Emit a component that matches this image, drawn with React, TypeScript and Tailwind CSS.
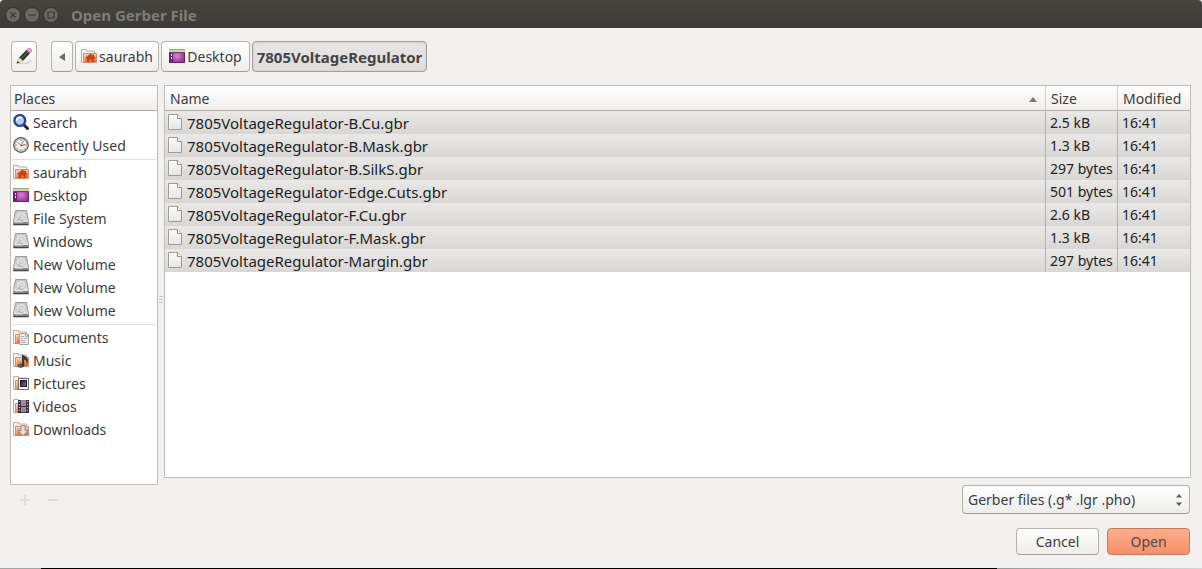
import React from "react";

const ICON = "mb-0.5 h-4 w-4 shrink-0";

function FolderBack() {
  return (
    <>
      <path d="M.5 14.500V1.500h5v1.500h8v3" fill="#f8f7f5" stroke="#b0aeaa" />
      <path d="M.5 14.500h3" stroke="#b0aeaa" />
      <path d="M2.500 14.500v-9h13v9z" fill="url(#folderOrange)" stroke="#dd8a62" />
      <path d="M3.500 13.500v-7h11" fill="none" stroke="#fff" strokeOpacity=".35" />
    </>
  );
}

function SharedGradients() {
  return (
    <svg className="absolute h-0 w-0" aria-hidden="true">
      <defs>
        <linearGradient id="folderOrange" x1="0" y1="0" x2="0" y2="1">
          <stop offset="0" stopColor="#f7cbad" />
          <stop offset="1" stopColor="#e4622c" />
        </linearGradient>
        <radialGradient id="deskPurple">
          <stop offset="0" stopColor="#d983d3" />
          <stop offset="1" stopColor="#9c359c" />
        </radialGradient>
        <linearGradient id="diskMetal" x1="0" y1="0" x2="0" y2="1">
          <stop offset="0" stopColor="#c4c4c4" />
          <stop offset="1" stopColor="#eaeaea" />
        </linearGradient>
        <linearGradient id="paper" x1="0" y1="0" x2="0" y2="1">
          <stop offset="0" stopColor="#fafafa" />
          <stop offset="1" stopColor="#e6e6e6" />
        </linearGradient>
        <linearGradient id="violet" x1="0" y1="0" x2="1" y2="1">
          <stop offset="0" stopColor="#2a2233" />
          <stop offset="1" stopColor="#8a6a9c" />
        </linearGradient>
      </defs>
    </svg>
  );
}

function HomeIcon() {
  return (
    <svg viewBox="0 0 16 16" className={ICON} aria-hidden="true">
      <FolderBack />
      <path
        d="M9.500 5.500 4.500 9.700v.8H6V14h2.500v-2.500h2V14H13v-3.500h1.500v-.8L13 8.500V6.500h-1.500v.7z"
        fill="#cb3f12"
      />
    </svg>
  );
}

function DesktopIcon() {
  return (
    <svg viewBox="0 0 16 16" className={ICON} aria-hidden="true">
      <rect x=".5" y="1.500" width="15" height="13" fill="url(#deskPurple)" stroke="#6c2069" />
      <rect x="0" y="1" width="16" height="3" fill="#d3d2ad" />
      <path d="M0 1.500h16" stroke="#a3a180" />
      <path d="M0 4.500h16" stroke="#5d4f55" />
      <rect x="1" y="5" width="3" height="9" fill="#6d2470" />
      <path d="M2 6h1v2H2zM2 9h1v2H2z" fill="#f1d6f0" />
    </svg>
  );
}

function DiskIcon() {
  return (
    <svg viewBox="0 0 16 16" className={ICON} aria-hidden="true">
      <path d="M2.500.500h11l2 11v3.500H.5v-3.500z" fill="url(#diskMetal)" stroke="#9a9a9a" />
      <ellipse cx="8" cy="5.800" rx="5" ry="4.500" fill="#dedede" stroke="#c0c0c0" strokeWidth=".8" />
      <circle cx="8.300" cy="6" r="1.500" fill="#f8f8f8" stroke="#aaa" strokeWidth=".7" />
      <path d="m4 11 3.500-4M6 9.500l4 1.500" stroke="#b0b0b0" />
      <path d="M1 12h14v2H1z" fill="#858585" />
      <path d="M.5 14.500h15" stroke="#444" />
      <path d="M2 12.500h8" stroke="#b5b5b5" />
    </svg>
  );
}

function SearchIcon() {
  return (
    <svg viewBox="0 0 16 16" className={ICON} aria-hidden="true">
      <path d="m11 11 3.500 3.500" stroke="#22252d" strokeWidth="3" strokeLinecap="round" />
      <circle cx="6.800" cy="6.500" r="5.400" fill="#b9cbe6" stroke="#2a489b" strokeWidth="2.400" />
      <path d="M3.600 6.500a3.200 3.200 0 0 1 5.400-2.300" fill="none" stroke="#fff" strokeWidth="1.600" />
    </svg>
  );
}

function ClockIcon() {
  return (
    <svg viewBox="0 0 16 16" className={ICON} aria-hidden="true">
      <circle cx="8" cy="8" r="7.300" fill="#d5d5d3" stroke="#5b5b59" strokeWidth="1.200" />
      <circle cx="8" cy="8" r="5.800" fill="#f4f4f3" stroke="#b0b0ae" strokeWidth=".8" />
      <path d="M8 3v1M8 12v1M3 8h1M12 8h1M4.500 11.500l.7-.7M11.500 11.500l-.7-.7" stroke="#888" />
      <path d="m4.500 5 3.500 3.500 2.500-4.500" stroke="#777" fill="none" strokeWidth=".9" />
      <path d="m7.500 8.700 4.500-1" stroke="#cf3333" />
    </svg>
  );
}

function DocumentsIcon() {
  return (
    <svg viewBox="0 0 16 16" className={ICON} aria-hidden="true">
      <FolderBack />
      <path d="M6.500 4.500h6l3 3v8h-9z" fill="#ececeb" stroke="#a2a2a0" />
      <path d="M12.500 4.500v3h3M8 7.500h3M8 9.500h2M11 9.500h3M8 11.500h4M8 13.500h5" stroke="#b0b0ae" fill="none" />
    </svg>
  );
}

function MusicIcon() {
  return (
    <svg viewBox="0 0 16 16" className={ICON} aria-hidden="true">
      <FolderBack />
      <path
        d="M9 2c1 2 5 1.500 5.800 5.500.3 2-.3 4-1 5 0-2.500-.8-4.500-2.500-5V13c0 1.800-1.500 2.800-3.300 2.800S5 15 5 13.700s1.500-2.700 4-2.200z"
        fill="#3b3b38"
      />
      <ellipse cx="7.400" cy="13.500" rx="1.400" ry="1" fill="#83837e" />
    </svg>
  );
}

function PicturesIcon() {
  return (
    <svg viewBox="0 0 16 16" className={ICON} aria-hidden="true">
      <FolderBack />
      <rect x="5.500" y="3.500" width="10" height="11" fill="#fafafa" stroke="#74746f" />
      <rect x="7.500" y="5.500" width="6" height="6" fill="url(#violet)" stroke="#1e1a24" />
    </svg>
  );
}

function VideosIcon() {
  return (
    <svg viewBox="0 0 16 16" className={ICON} aria-hidden="true">
      <FolderBack />
      <rect x="5" y="2" width="11" height="13" fill="#3a363c" />
      <path d="M8 2h5v6H8zM8 9h5v5H8z" fill="#a583ad" />
      <path d="M6.500 3v12M14.500 3v12" stroke="#c9c9c9" strokeDasharray="1 2" />
    </svg>
  );
}

function DownloadsIcon() {
  return (
    <svg viewBox="0 0 16 16" className={ICON} aria-hidden="true">
      <FolderBack />
      <path d="M8 4.500h4v5h3L10 15 5 9.500h3z" fill="#dededc" stroke="#8f8f8a" />
    </svg>
  );
}

function FileIcon() {
  return (
    <svg viewBox="0 0 14 16" className="mb-0.5 h-4 w-3.5 shrink-0" aria-hidden="true">
      <path d="M.5.500h9l4 4v11H.5z" fill="url(#paper)" stroke="#9b9b99" />
      <path d="M9.500.500v4h4" fill="#fff" stroke="#8d8d8b" />
      <path d="M1.500 14.500v-13h7" fill="none" stroke="#fff" />
    </svg>
  );
}

function PencilIcon() {
  return (
    <svg viewBox="0 0 16 16" className={ICON} aria-hidden="true">
      <path d="M2 15.500h8l5-3" stroke="#bdbdbb" strokeWidth="1.500" fill="none" opacity=".6" />
      <path d="m3 9.500 7.500-7.500L14 5.200l-7 7.800z" fill="#353734" />
      <path d="m5 10.800 7-7.300" stroke="#71746e" strokeWidth=".9" />
      <path d="M3 9.500 7 13 .8 15.500z" fill="#efe69d" stroke="#a8a05c" strokeWidth=".5" />
      <path d="m1.700 13 1.600 1.400-2.600 1.200z" fill="#222" />
      <path d="m10.500 2 1.700-1.500c1.700-.9 4.300 1.200 3.500 3L14 5.200z" fill="#dc9fd0" stroke="#a76c9d" strokeWidth=".6" />
    </svg>
  );
}

type Place = { label: string; Icon: () => React.ReactElement };

const placeGroups: Place[][] = [
  [
    { label: "Search", Icon: SearchIcon },
    { label: "Recently Used", Icon: ClockIcon },
  ],
  [
    { label: "saurabh", Icon: HomeIcon },
    { label: "Desktop", Icon: DesktopIcon },
    { label: "File System", Icon: DiskIcon },
    { label: "Windows", Icon: DiskIcon },
    { label: "New Volume", Icon: DiskIcon },
    { label: "New Volume", Icon: DiskIcon },
    { label: "New Volume", Icon: DiskIcon },
  ],
  [
    { label: "Documents", Icon: DocumentsIcon },
    { label: "Music", Icon: MusicIcon },
    { label: "Pictures", Icon: PicturesIcon },
    { label: "Videos", Icon: VideosIcon },
    { label: "Downloads", Icon: DownloadsIcon },
  ],
];

const files = [
  ["7805VoltageRegulator-B.Cu.gbr", "2.5 kB"],
  ["7805VoltageRegulator-B.Mask.gbr", "1.3 kB"],
  ["7805VoltageRegulator-B.SilkS.gbr", "297 bytes"],
  ["7805VoltageRegulator-Edge.Cuts.gbr", "501 bytes"],
  ["7805VoltageRegulator-F.Cu.gbr", "2.6 kB"],
  ["7805VoltageRegulator-F.Mask.gbr", "1.3 kB"],
  ["7805VoltageRegulator-Margin.gbr", "297 bytes"],
];

const BUTTON =
  "flex items-center justify-center rounded border border-[#b5b2ad] border-b-[#9f9c97] bg-linear-to-b from-white to-[#eeedeb]";
const HEADER = "bg-linear-to-b from-white to-[#efeeec] border-b border-[#aeaba6]";

function WindowButton({ label, path }: { label: string; path: string }) {
  return (
    <button
      type="button"
      aria-label={label}
      className="flex h-4 w-4 items-center justify-center rounded-full border border-[#33322e] bg-[#6a6862]"
    >
      <svg viewBox="0 0 8 8" className="h-2 w-2" fill="none" stroke="#383733" strokeWidth="1.200" aria-hidden="true">
        <path d={path} />
      </svg>
    </button>
  );
}

export default function App() {
  return (
    <div className="flex min-h-screen flex-col bg-[#f2f1f0] font-['Noto_Sans',sans-serif] text-sm leading-5 text-[#3c3c3c]">
      <SharedGradients />
      <header className="flex h-7 items-center gap-[3px] rounded-t bg-linear-to-b from-[#45443f] to-[#3c3b37] px-[5px] pt-px">
        <WindowButton label="Close" path="M1.500 1.500l5 5M6.500 1.500l-5 5" />
        <WindowButton label="Minimize" path="M.5 4h7" />
        <WindowButton label="Maximize" path="M1 1h6v6H1z" />
        <h1 className="ml-[9px] text-[15px] font-bold text-[#807d76]">Open Gerber File</h1>
      </header>

      <main className="flex grow flex-col px-[11px] pt-[13px] pb-[13px]">
        <nav aria-label="Path" className="flex h-[31px] gap-0.5">
          <button type="button" aria-label="Type a file name" className={`${BUTTON} mr-3 w-[26px]`}>
            <PencilIcon />
          </button>
          <button type="button" aria-label="Back" className={`${BUTTON} w-[22px]`}>
            <svg viewBox="0 0 6 8" className="h-2 w-1.5" fill="#6b6965" aria-hidden="true">
              <path d="M6 0v8L0 4z" />
            </svg>
          </button>
          <button type="button" className={`${BUTTON} min-w-[84px] gap-0.5 px-1`}>
            <HomeIcon />
            saurabh
          </button>
          <button type="button" className={`${BUTTON} min-w-[89px] gap-0.5 px-1`}>
            <DesktopIcon />
            Desktop
          </button>
          <button
            type="button"
            aria-pressed="true"
            className="min-w-[175px] rounded border border-[#a19e99] bg-linear-to-b from-[#e9e7e6] to-[#dfdcda] px-[3px] text-[15px] font-bold text-[#444] shadow-[inset_0_1px_3px_#00000018]"
          >
            7805VoltageRegulator
          </button>
        </nav>

        <div className="-ml-px mt-[13px] flex grow">
          <section className="flex w-[148px] shrink-0 flex-col">
            <div className="grow border border-[#bfbcb7] bg-white">
              <h2 className={`${HEADER} h-[25px] px-[3px] pt-[3px]`}>Places</h2>
              {placeGroups.map((group, index) => (
                <ul key={index}>
                  {index > 0 && (
                    <li aria-hidden="true" className="mx-px flex h-1 items-center">
                      <span className="h-px w-full bg-[#dfdfdf]" />
                    </li>
                  )}
                  {group.map(({ label, Icon }, row) => (
                    <li key={row}>
                      <button type="button" className="flex h-[23px] w-full items-center gap-1 px-0.5 text-left">
                        <Icon />
                        {label}
                      </button>
                    </li>
                  ))}
                </ul>
              ))}
            </div>
            <div className="flex h-[29px] items-center gap-[18px] pl-[10px] text-[#dfdedc]">
              <button type="button" disabled aria-label="Add bookmark">
                <svg viewBox="0 0 10 10" className="h-2.5 w-2.5" fill="currentColor" aria-hidden="true">
                  <path d="M4 0h2v4h4v2H6v4H4V6H0V4h4z" />
                </svg>
              </button>
              <button type="button" disabled aria-label="Remove bookmark">
                <svg viewBox="0 0 10 10" className="h-2.5 w-2.5" fill="currentColor" aria-hidden="true">
                  <path d="M0 4h10v2H0z" />
                </svg>
              </button>
            </div>
          </section>

          <div className="flex w-1.5 shrink-0 items-center justify-center" aria-hidden="true">
            <svg viewBox="0 0 4 8" className="h-2 w-1" stroke="#c9c7c4">
              <path d="M0 .5h4M0 3.500h4M0 6.500h4" />
            </svg>
          </div>

          <section className="flex min-w-0 grow flex-col gap-[7px]">
            <div className="grow border border-[#bfbcb7] bg-white">
              <table className="w-full table-fixed border-separate border-spacing-0 text-left">
                <colgroup>
                  <col />
                  <col className="w-[72px]" />
                  <col className="w-[73px]" />
                </colgroup>
                <thead>
                  <tr className="h-[25px]">
                    <th scope="col" className={`${HEADER} pt-[3px] pr-2 pb-px pl-[5px] font-normal`}>
                      <span className="flex items-center justify-between">
                        Name
                        <svg viewBox="0 0 8 5" className="h-[5px] w-2" fill="#7a7874" aria-hidden="true">
                          <path d="M4 0l4 5H0z" />
                        </svg>
                      </span>
                    </th>
                    <th scope="col" className={`${HEADER} border-l border-l-[#cfcdc9] px-[5px] pt-[3px] pb-px font-normal`}>
                      Size
                    </th>
                    <th scope="col" className={`${HEADER} border-l border-l-[#cfcdc9] px-[5px] pt-[3px] pb-px font-normal`}>
                      Modified
                    </th>
                  </tr>
                </thead>
                <tbody className="text-[#222]">
                  {files.map(([name, size]) => (
                    <tr key={name} className="h-[23px]">
                      <td className="bg-linear-to-b from-[#eae9e8] to-[#d9d7d5] py-0 pr-1 pl-[3px] text-[15px]">
                        <span className="flex items-center gap-[5px]">
                          <FileIcon />
                          {name}
                        </span>
                      </td>
                      <td className="border-l border-[#b5b3b0] bg-linear-to-b from-[#eae9e8] to-[#d9d7d5] py-0 pl-1 whitespace-nowrap">
                        {size}
                      </td>
                      <td className="border-l border-[#b5b3b0] bg-linear-to-b from-[#eae9e8] to-[#d9d7d5] py-0 pl-1">
                        16:41
                      </td>
                    </tr>
                  ))}
                </tbody>
              </table>
            </div>
            <div className="relative mr-px self-end">
              <select
                aria-label="File type"
                className="h-[29px] w-[228px] appearance-none rounded border border-[#b5b2ad] border-b-[#9f9c97] bg-linear-to-b from-white to-[#eeedeb] pl-[5px]"
              >
                <option>Gerber files (.g* .lgr .pho)</option>
              </select>
              <svg
                viewBox="0 0 6 14"
                className="pointer-events-none absolute top-2 right-2 h-3.5 w-1.5"
                fill="#5c5a56"
                aria-hidden="true"
              >
                <path d="M3 1l3 3.500H0zM3 13l3-3.500H0z" />
              </svg>
            </div>
          </section>
        </div>

        <footer className="mt-3.5 mr-px flex justify-end gap-2">
          <button type="button" className={`${BUTTON} h-[27px] w-[83px]`}>
            Cancel
          </button>
          <button
            type="button"
            className="h-[27px] w-[83px] rounded border border-[#c07a5c] bg-linear-to-b from-[#fdae8e] to-[#f68f67] text-[#4f4a47]"
          >
            Open
          </button>
        </footer>
      </main>
      <div className="flex h-px" aria-hidden="true">
        <span className="w-[41px] bg-[#a3a3a3]" />
        <span className="grow bg-black" />
        <span className="w-[205px] bg-linear-to-r from-[#999] to-[#d5d5d5]" />
      </div>
    </div>
  );
}
